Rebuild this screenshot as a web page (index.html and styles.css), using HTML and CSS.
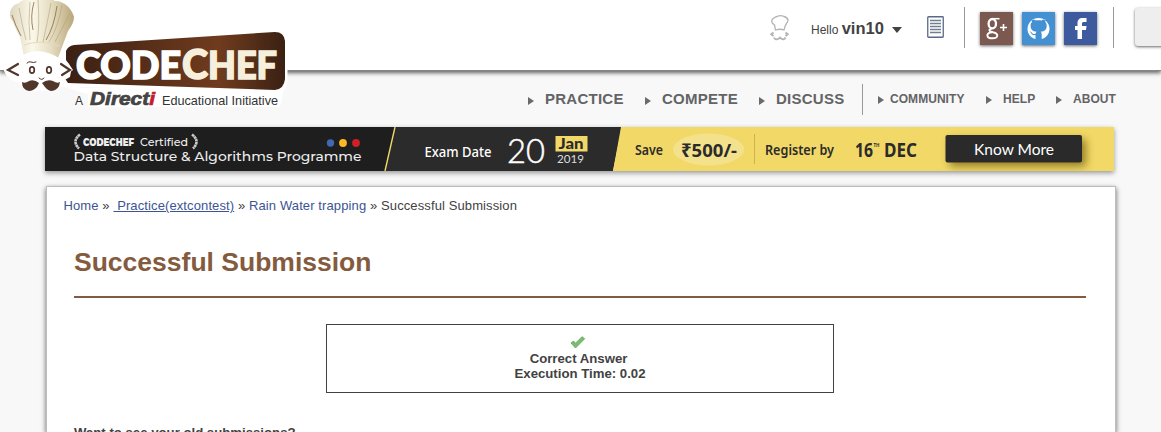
FILE: index.html
```html
<!DOCTYPE html>
<html lang="en">
<head>
<meta charset="utf-8">
<title>Successful Submission | CodeChef</title>
<link rel="stylesheet" href="styles.css">
</head>
<body>
<header class="topbar">
  <svg class="chef-icon" width="22" height="28" viewBox="0 0 22 28" fill="none" stroke="#b4b4b4" stroke-width="1.3">
    <path d="M6.500 16 5.500 11C2.500 9 2 7 3.500 5 5 4 6 3 8 2.500 10 1.500 13 1.500 15 2.500 17 3 18.500 4 19 6 19 8 18 9 16.500 11L15 16Q11 14.500 6.500 16Z"/>
    <path d="M4.500 18.500 2.300 20.300 4.500 22M16.500 18.500 18.700 20.300 16.500 22" stroke-width="2"/>
    <path d="M5 23.500Q6 26.500 10 24.500L11 23.500 12 24.500Q15 26.500 16.500 23.500" stroke-width="1.800"/>
  </svg>
  <div class="user">Hello <b>vin10</b><i class="caret"></i></div>
  <svg class="list-icon" width="17" height="22" viewBox="0 0 17 22">
    <rect x=".75" y=".75" width="15.500" height="20.500" rx=".7" fill="#fff" stroke="#596a88" stroke-width="1.300"/>
    <path d="M3 4.500h11M3 7.500h11M3 10.500h11M3 13.500h11M3 16.500h11" stroke="#71808f" stroke-width="1.300"/>
  </svg>
  <div class="social">
    <a class="tile google"><svg width="33" height="33" viewBox="0 0 33 33" fill="none" stroke="#fff"><ellipse cx="12.300" cy="11.700" rx="3.700" ry="4.700" stroke-width="2.300"/><path d="M13 6.700h6.500" stroke-width="1.500"/><path d="M12 16.300C7.500 18 9.500 19.500 13 20.300c6 1.200 5.500 6-.5 6-6.500 0-7-5.300-.5-6" stroke-width="1.900"/><path d="M20 15.500h7M23.500 12v7" stroke-width="1.600"/></svg></a>
    <a class="tile github"><svg width="33" height="33" viewBox="0 0 33 33"><path fill="#fff" d="M13.500 27v-4c-2 .4-3.500 0-4.500-2-.5-.8-1-1.200-1.700-1.500 2-.4 2.400 1.200 3.300 2 .9.700 1.900.6 3 .2.100-.9.500-1.500 1-2-4-.5-6-2-6-6 0-1.500.5-2.700 1.400-3.600-.3-1-.2-2 .2-2.900 1.500 0 2.700.7 3.600 1.300 1.800-.5 4-.5 5.800 0 .9-.7 2-1.300 3.500-1.300.4 1 .4 2 .2 2.900.9.900 1.400 2.100 1.400 3.600 0 4-2 5.500-6 6 .7.600 1 1.500 1 2.700V27C24 26 27.500 22 27.500 17A11 11 0 1 0 5.500 17C5.500 22 9 26 13.500 27Z"/></svg></a>
    <a class="tile facebook"><svg width="33" height="33" viewBox="0 0 33 33"><path fill="#fff" d="M13.500 27V18H11v-4h2.500v-2.500C13.500 8 15 6 19 6h3.500v4H20c-1.500 0-2 .6-2 2v2h4.500l-.5 4h-4v9Z"/></svg></a>
  </div>
  <div class="search"></div>
</header>

<svg class="logo" width="300" height="115" viewBox="0 0 300 115">
  <defs>
    <linearGradient id="sign"><stop offset="0" stop-color="#3a2013"/><stop offset=".7" stop-color="#703b1e"/><stop offset=".84" stop-color="#573019"/><stop offset="1" stop-color="#3a2013"/></linearGradient>
    <linearGradient id="hat"><stop offset="0" stop-color="#ded6be"/><stop offset=".35" stop-color="#fbf8ea"/><stop offset=".65" stop-color="#e4dcc0"/><stop offset="1" stop-color="#b9a67a"/></linearGradient>
  </defs>
  <g fill="#fff" stroke="#fff" stroke-linejoin="round">
    <path stroke-width="7" d="M70 44 276 32Q284 32 284 40V80Q284 89 276 89L70 83Z"/>
    <path stroke="none" d="M3 68Q13 57 24 59Q40 48 58 57L73 62 80 88H284L280 107H88V94L61 86Q52 94 40 90 24 95 19 82Q7 81 3 68Z"/>
  </g>
  <path fill="url(#sign)" d="M74 45 275 32Q284 32 285 41V79Q284 89 275 90L68 83 64 77 73 70 66 60 66 51Q68 46 74 45Z"/>
  <path fill="url(#hat)" d="M24 57 20 37Q16 30 13 22C7 16 10 5 19 3 25-3 34-2 40-1Q48-4 55 1C65 1 72 9 74 17Q74 23 68 31L58 58Q42 47 24 57Z"/>
  <g fill="none">
    <path d="M19 8Q22 25 26 40M30 2Q28 22 30 40M38 0Q40 25 37 42M51 3Q47 24 43 42M62 5Q58 28 49 42M70 13Q62 29 55 42" stroke="#b2a178" stroke-width=".9" opacity=".65"/>
    <path d="M12 15Q15 25 21 36M34 2Q30 16 33 30M57 6Q54 27 46 40" stroke="#937650" stroke-width=".9"/>
    <path d="M24 45Q41 39 60 46" stroke="#e3dbbf"/>
  </g>
  <path d="M23 55Q40 46 59 58L67 62Q73 66 70 77L61 82H20L15 73 18 62Z" fill="#fff"/>
  <g fill="none" stroke="#51362a" stroke-linecap="round">
    <path d="M18 64 8 70 18 75M61 64 70 70 62 75" stroke-width="2.200"/>
    <ellipse cx="32" cy="70" rx="2.300" ry="3.100" stroke-width="1.700"/><ellipse cx="49" cy="70" rx="2.300" ry="3.100" stroke-width="1.700"/>
    <path d="M27 63Q29 61 31 62T36 62M39 78Q42 81 44 78" stroke-width="1"/>
  </g>
  <path fill="#51362a" d="M22 82Q25 84 29 81 34 79 39 83L37 87Q33 91 29 91 22 90 22 82ZM60 82Q57 84 53 81 47 79 42 83L45 87Q48 91 52 91 59 90 60 82Z"/>
  <g class="wordmark">
    <text x="76" y="79" textLength="105" lengthAdjust="spacingAndGlyphs" font-size="38" fill="#fff" stroke="#fff" stroke-width="1.600">CODE</text>
    <text x="182" y="78.500" textLength="26" lengthAdjust="spacingAndGlyphs" font-size="41" fill="#f5efdc" stroke="#f5efdc" stroke-width="1.500">C</text>
    <text x="208" y="78.500" textLength="69" lengthAdjust="spacingAndGlyphs" font-size="37" fill="#f5efdc" stroke="#f5efdc" stroke-width="1.500">HEF</text>
  </g>
  <text class="sans" x="75" y="105" font-size="12" fill="#333">A</text>
  <text class="directi" x="90" y="104.500" textLength="65" lengthAdjust="spacingAndGlyphs">Direct<tspan fill="#c51b2f" stroke="#c51b2f">i</tspan></text>
  <text class="educational" x="162" y="105" textLength="116" lengthAdjust="spacingAndGlyphs">Educational Initiative</text>
</svg>

<nav class="menu">
  <a class="main">PRACTICE</a>
  <a class="main">COMPETE</a>
  <a class="main">DISCUSS</a>
  <a class="sub first">COMMUNITY</a>
  <a class="sub">HELP</a>
  <a class="sub">ABOUT</a>
</nav>

<svg class="banner" width="1069" height="44" viewBox="0 0 1069 44">
  <defs><filter id="soft" x="-20%" y="-30%" width="150%" height="190%"><feDropShadow dx="4" dy="4" stdDeviation="4" flood-color="#5e4c00" flood-opacity=".65"/></filter></defs>
  <path fill="#1e1e1e" d="M0 0h351l-10 44H0Z"/>
  <path fill="#2b2b2b" d="M350 0h227l-9 44H340Z"/>
  <path fill="#f2d967" d="M576 0h493v44H568Z"/>
  <path d="M350 0 340 44" stroke="#f2d967" stroke-width="1.400"/>
  <g fill="none" stroke="#ccc" stroke-width="2.600" stroke-dasharray="2.600 .4"><path d="M35 7.500Q26.500 14 34 21.500M147 7.500Q155.500 14 148 21.500"/></g>
  <g class="montserrat" fill="#eee">
    <text x="38" y="19" textLength="51" lengthAdjust="spacingAndGlyphs" font-size="10.500" font-weight="900">CODECHEF</text>
    <text x="95" y="19" textLength="48" lengthAdjust="spacingAndGlyphs" font-size="11.500" font-weight="500">Certified</text>
    <text x="28.500" y="34" textLength="288" lengthAdjust="spacingAndGlyphs" font-size="13.500" font-weight="500">Data Structure &amp; Algorithms Programme</text>
  </g>
  <circle cx="285.500" cy="16" r="3.700" fill="#4169b2"/><circle cx="298" cy="16" r="3.900" fill="#fdb924"/><circle cx="311" cy="16" r="3.900" fill="#d02027"/>
  <text class="noto" x="379.500" y="30" textLength="67" lengthAdjust="spacingAndGlyphs" font-size="14" font-weight="500" fill="#fff">Exam Date</text>
  <text class="lato" x="462" y="36" textLength="38" lengthAdjust="spacingAndGlyphs" font-size="33" font-weight="300" fill="#fff" stroke="#fff" stroke-width=".5">20</text>
  <path fill="#f2d967" d="M510.500 9h32v15.500h-32Z"/>
  <text class="lato" x="513.500" y="22" textLength="25" lengthAdjust="spacingAndGlyphs" font-size="15" font-weight="900" fill="#2b2b2b">Jan</text>
  <text class="lato" x="512" y="35.500" textLength="27" lengthAdjust="spacingAndGlyphs" font-size="12" fill="#ddd">2019</text>
  <g fill="#2b2b2b">
    <text class="noto" x="590" y="28" textLength="28" lengthAdjust="spacingAndGlyphs" font-size="14" font-weight="600">Save</text>
    <ellipse cx="663.500" cy="22.500" rx="35.500" ry="16" fill="#f4e18b"/>
    <text class="noto" x="636" y="30" textLength="56" lengthAdjust="spacingAndGlyphs" font-size="18.500" font-weight="700">₹500/-</text>
    <path d="M709.500 7v30" stroke="#cbb450"/>
    <text class="noto" x="720" y="28" textLength="69" lengthAdjust="spacingAndGlyphs" font-size="14" font-weight="600">Register by</text>
    <text class="noto" x="810" y="30" textLength="18" lengthAdjust="spacingAndGlyphs" font-size="20" font-weight="700">16</text>
    <text class="noto" x="828.500" y="20" textLength="6" lengthAdjust="spacingAndGlyphs" font-size="6" font-weight="700">TH</text>
    <text class="noto" x="839" y="30" textLength="33" lengthAdjust="spacingAndGlyphs" font-size="20" font-weight="700">DEC</text>
  </g>
  <rect x="900.500" y="8" width="136.500" height="27.500" rx="2" fill="#2a2a2a" filter="url(#soft)"/>
  <text class="lato" x="929" y="27.500" textLength="80" lengthAdjust="spacingAndGlyphs" font-size="14.500" fill="#fff">Know More</text>
</svg>

<main class="panel">
  <div class="crumbs"><a>Home</a> » <a class="under">&nbsp;Practice(extcontest)</a> » <a>Rain Water trapping</a> » Successful Submission</div>
  <h1>Successful Submission</h1>
  <div class="result">
    <svg width="16" height="14" viewBox="0 0 16 14"><path d="M1 7 3.500 5 5.500 7.200 12 .7 14.700 2.700 5.500 12Z" fill="#79bd72" stroke="#60a35b" stroke-width=".8" stroke-linejoin="round"/></svg>
    <div class="verdict">Correct Answer</div>
    <div>Execution Time: 0.02</div>
  </div>
  <p class="old">Want to see your old submissions?</p>
</main>
</body>
</html>
```
FILE: styles.css
```css
* { box-sizing: border-box; }
body {
  display: flex;
  flex-direction: column;
  margin: 0;
  height: 432px;
  overflow: hidden;
  background: #f8f8f8;
  color: #424242;
  font-family: "Liberation Sans", Arial, sans-serif;
}
.topbar {
  display: flex;
  flex: none;
  align-items: flex-start;
  height: 71px;
  padding-left: 769px;
  background: #fff;
  border-bottom: 1px solid #858585;
  box-shadow: 0 2px 4px rgba(0, 0, 0, .6);
}
.topbar > * { flex: none; }
.chef-icon { margin-top: 14px; }
.user {
  display: flex;
  align-items: baseline;
  width: 116px;
  margin: 19px 0 0 20px;
  font-size: 12px;
  line-height: 19px;
  white-space: pre;
}
.user b { font-size: 16.500px; }
.caret {
  align-self: center;
  margin: 0 0 0 8px;
  border: 5px solid transparent;
  border-top: 6px solid #424242;
  border-bottom: 0;
}
.list-icon { margin-top: 16px; }
.social {
  display: flex;
  gap: 9px;
  width: 150px;
  height: 41px;
  margin: 7px 0 0 20px;
  padding: 5px 0 0 15px;
  border: solid #999;
  border-width: 0 1px;
}
.tile {
  width: 33px;
  height: 33px;
  box-shadow: 0 1px 3px rgba(0, 0, 0, .6);
}
.tile svg { display: block; }
.google { background: #7b5950; }
.github { background: #4391d2; }
.facebook { background: #3d5a9f; }
.search {
  width: 60px;
  height: 38px;
  margin: 8px -34px 0 21px;
  background: #eee;
  border-radius: 3px;
  box-shadow: 0 1px 3px rgba(0, 0, 0, .6);
}
.logo { position: absolute; top: 0; left: 0; }
.wordmark { font-family: Lato, sans-serif; font-weight: 900; }
.directi {
  font: italic 900 17.500px "Liberation Sans", sans-serif;
  fill: #444;
  stroke: #444;
  stroke-width: .7;
}
.educational, .sans { font-family: "Liberation Sans", sans-serif; }
.educational { font-size: 13px; fill: #333; }
.menu {
  display: grid;
  flex: none;
  grid-template-columns: 117px 114px 103px 124px 70px 80px;
  height: 56px;
  padding: 13px 0 12px 528px;
  color: #636466;
  font-weight: bold;
}
.menu a { display: flex; white-space: nowrap; line-height: 30px; }
.menu a::before {
  content: "";
  height: 0;
  margin: 13px 11px 0 0;
  border: 4px solid transparent;
  border-left: 6px solid #6a6a6a;
  border-right: 0;
}
.menu .main { font-size: 15px; letter-spacing: .25px; }
.menu .sub { font-size: 12px; letter-spacing: .05px; }
.menu .sub::before { margin-top: 12px; }
.menu .first {
  height: 31px;
  padding-left: 15px;
  border-left: 1px solid #999;
}
.menu .first::before { margin-right: 6px; }
.banner {
  display: block;
  flex: none;
  margin-left: 45px;
  box-shadow: 0 2px 5px rgba(0, 0, 0, .4);
}
.montserrat { font-family: "Montserrat", "Noto Sans", sans-serif; }
.noto { font-family: "Noto Sans", sans-serif; }
.lato { font-family: Lato, sans-serif; }
.panel {
  flex: 1;
  min-height: 0;
  width: 1070px;
  margin: 15px 0 0 46px;
  padding: 0 29px 0 27px;
  overflow: hidden;
  background: #fff;
  border: 1px solid #bebebe;
  border-bottom: 0;
  box-shadow: 0 2px 5px rgba(0, 0, 0, .6);
}
.crumbs {
  margin: 11px 0 0 -10.500px;
  font-size: 13px;
  line-height: 16px;
  letter-spacing: .11px;
}
.crumbs a { color: #3d5494; }
.crumbs .under { text-decoration: underline; }
h1 {
  height: 64px;
  margin: 20px 0 26px;
  border-bottom: 2px solid #845b3e;
  color: #845b3e;
  font-size: 26.500px;
  line-height: 57px;
}
.result {
  width: 508px;
  height: 69px;
  margin-left: 252px;
  padding-top: 10px;
  border: 1px solid #424242;
  font-size: 13.200px;
  font-weight: bold;
  line-height: 15px;
  text-align: center;
}
.result svg { display: block; margin: 0 0 0 243px; height: 16px; }
.verdict { padding-right: 3px; }
.old { margin: 31px 0 0; font-size: 13.200px; font-weight: bold; line-height: 18px; }
```
